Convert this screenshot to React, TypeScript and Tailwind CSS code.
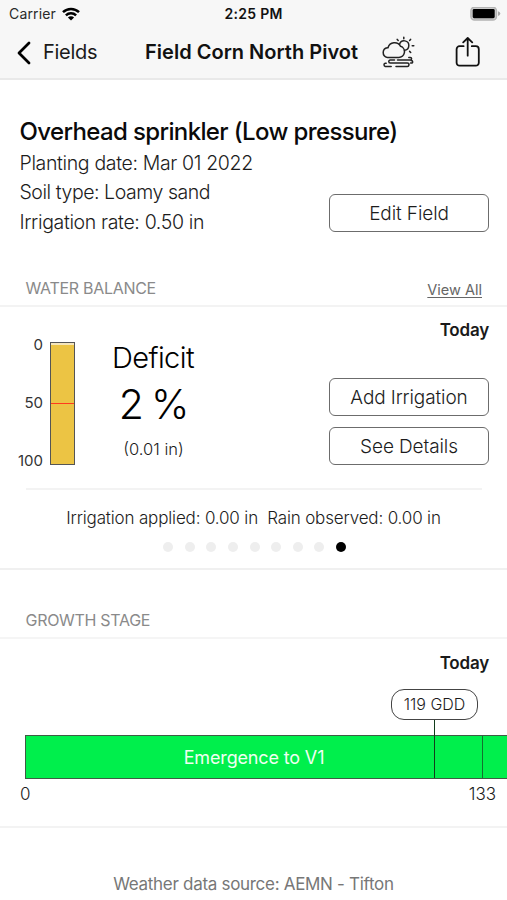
import React from "react";

function StatusBar() {
  return (
    <div className="relative flex h-7 items-center justify-between pl-[9px] pr-[6px]">
      <div className="flex items-center gap-[6px] text-[14px] leading-7 text-[#2a2a2a]">
        <span className="tracking-[0.15px]">Carrier</span>
        <svg width="18" height="14" viewBox="0 0 18 14" fill="none" stroke="#000" strokeWidth="2.5">
          <path d="M1 5.2A11.4 11.4 0 0 1 17 5.2" />
          <path d="M3.9 8.4A7.3 7.3 0 0 1 14.1 8.4" />
          <path d="M9 13.4 5.9 10.5A4.4 4.4 0 0 1 12.1 10.5Z" fill="#000" stroke="none" />
        </svg>
      </div>
      <span className="absolute left-[224.5px] top-0 text-[14px] font-semibold leading-7 tracking-[0.3px] text-[#111]">
        2:25 PM
      </span>
      <svg width="31" height="14" viewBox="0 0 31 14">
        <rect x="0.9" y="0.2" width="25.6" height="12.8" rx="3.6" fill="#ccc" stroke="#b4b4b4" strokeWidth="1.4" />
        <rect x="2.7" y="2" width="22" height="9.2" rx="1.4" fill="#000" />
        <path d="M28 4.2Q30.3 4.8 30.3 6.6T28 9Z" fill="#a9a9a9" />
      </svg>
    </div>
  );
}

function WeatherIcon() {
  return (
    <svg width="33" height="33" viewBox="0 0 33 33" fill="none" stroke="#222" strokeWidth="1.5" strokeLinecap="round" strokeLinejoin="round">
      <path d="M5.4 21.4A4.9 4.9 0 0 1 5.4 11.7H6A6.9 6.9 0 0 1 18.6 10.3A5.7 5.7 0 0 1 16.6 21.4Z" />
      <path d="M17.6 8.2A4.7 4.7 0 1 1 22.4 14.2" />
      <path d="M21.8 1.2v1.6M15.2 3.4l1 1.1M28.6 3.4l-1 1.1M30.2 9.8h1.6M27.6 15.4l1.1 1.1" />
      <path
        d="M15.5 24H28.3A1.3 1.3 0 0 0 28.3 21.4H26.8M12.5 24H8.2A1.4 1.4 0 0 0 8.2 26.9H25.5M29.3 24.6A1.3 1.3 0 0 1 30.2 26.9H28.6M25.4 26.9A1.7 1.7 0 0 1 25 30.4H14M9.2 30.4H3.2A1.6 1.6 0 0 1 3.2 27.3H4.2"
        strokeWidth="1.5"
      />
    </svg>
  );
}

function NavBar() {
  return (
    <div className="flex h-[49px] items-center pl-[17px] text-[20px] leading-[49px]">
      <svg width="14" height="24" viewBox="0 0 14 24" fill="none" stroke="#000" strokeWidth="2.8" strokeLinecap="round" strokeLinejoin="round">
        <path d="M12 2 2 12l10 10" />
      </svg>
      <span className="ml-[12px] w-[102px] tracking-[-0.3px] text-[#1a1a1a]">Fields</span>
      <span className="w-[237px] whitespace-nowrap font-semibold tracking-[0.02px] text-[#111]">
        Field Corn North Pivot
      </span>
      <WeatherIcon />
      <svg className="ml-[40px]" width="26" height="32" viewBox="0 0 26 32" fill="none" stroke="#111" strokeWidth="1.8" strokeLinecap="round" strokeLinejoin="round">
        <path d="M8.6 9.2H4.6A3 3 0 0 0 1.6 12.2V25.7A3 3 0 0 0 4.6 28.7H20.8A3 3 0 0 0 23.8 25.7V12.2A3 3 0 0 0 20.8 9.2H16.8" />
        <path d="M12.7 18.7V1.2M8.2 5.4 12.7 1l4.5 4.4" />
      </svg>
    </div>
  );
}

function OutlineButton({ children }: { children: React.ReactNode }) {
  return (
    <button className="flex h-[38px] w-[160px] items-center justify-center rounded-[6px] border border-[#6c6c6c] bg-white pt-[2px] text-[19px] font-light tracking-[-0.1px] text-[#1c1c1c]">
      {children}
    </button>
  );
}

function FieldSummary() {
  return (
    <section className="flex h-[190px] justify-between pl-[19.5px] pr-[18px] pt-[35px]">
      <div className="w-[300px] whitespace-nowrap text-[19.5px] font-light leading-[29.4px] tracking-[-0.35px] text-[#1c1c1c]">
        <h1 className="text-[24px] font-medium leading-[35px] tracking-[-0.63px] text-[#0a0a0a]">
          Overhead sprinkler (Low pressure)
        </h1>
        <p>Planting date: Mar 01 2022</p>
        <p className="tracking-[-0.45px]">Soil type: Loamy sand</p>
        <p>Irrigation rate: 0.50 in</p>
      </div>
      <div className="pt-[80px]">
        <OutlineButton>Edit Field</OutlineButton>
      </div>
    </section>
  );
}

function WaterBalance() {
  return (
    <section>
      <div className="flex h-[38px] justify-between border-b-2 border-[#f3f3f3] pl-[25.5px] pr-[25px]">
        <h2 className="text-[16px] leading-[38px] tracking-[-0.3px] text-[#8a8a8a]">WATER BALANCE</h2>
        <a className="text-[14.5px] leading-[41px] text-[#666] underline underline-offset-2">View All</a>
      </div>
      <div className="flex h-[181px] pr-[18px]">
        <div className="flex w-[43px] flex-col items-end pt-[28px] text-[15px] leading-[20px] text-[#333]">
          <span>0</span>
          <span className="mt-[38px]">50</span>
          <span className="mt-[38px]">100</span>
        </div>
        <div className="ml-[7px] mt-[35px] flex h-[123px] w-[25px] flex-col border border-[#555] bg-[#ecc444]">
          <div className="h-[2px] shrink-0 bg-[#f5e6bb]" />
          <div className="mt-[58px] h-px shrink-0 bg-[#ff3b1e]" />
        </div>
        <div className="ml-[3px] flex w-[150px] flex-col items-center pt-[33px] font-light text-black">
          <span className="text-[29px] leading-[36px] tracking-[-0.6px]">Deficit</span>
          <span className="text-[41px] leading-[56px] tracking-[-2.2px]">2 %</span>
          <span className="mt-[2px] pl-px text-[16.5px] leading-[30px] text-[#1c1c1c]">(0.01 in)</span>
        </div>
        <div className="ml-auto flex flex-col items-end">
          <span className="mt-[13px] text-[17px] font-semibold leading-[20px] tracking-[-0.2px] text-[#1a1a1a]">Today</span>
          <div className="mt-[38px] flex flex-col gap-[11px]">
            <OutlineButton>Add Irrigation</OutlineButton>
            <OutlineButton>See Details</OutlineButton>
          </div>
        </div>
      </div>
      <div className="ml-[26px] mr-[25px] h-[2px] bg-[#f3f3f3]" />
      <p className="h-[50px] whitespace-pre text-center text-[17px] font-light leading-[56px] tracking-[-0.16px] text-[#1c1c1c]">
        Irrigation applied: 0.00 in  Rain observed: 0.00 in
      </p>
      <div className="flex h-[30px] justify-center gap-[11.6px] border-b-2 border-[#f0f0f0] pl-[2px] pt-[2px]">
        {[0, 1, 2, 3, 4, 5, 6, 7].map((page) => (
          <span key={page} className="size-[10px] rounded-full bg-[#eeeeee]" />
        ))}
        <span className="size-[10px] rounded-full bg-black" />
      </div>
    </section>
  );
}

function GrowthStage() {
  return (
    <section>
      <h2 className="h-[69px] border-b-2 border-[#f5f5f5] pl-[25.5px] pt-[31px] text-[16px] leading-[38px] tracking-[-0.3px] text-[#8a8a8a]">
        GROWTH STAGE
      </h2>
      <div className="h-[189px] border-b-2 border-[#f3f3f3] pt-[14px]">
        <div className="pr-[18px] text-right text-[17px] font-semibold leading-[20px] tracking-[-0.2px] text-[#1a1a1a]">Today</div>
        <div className="relative ml-[25px] mt-[62px] flex h-[44px] border-y border-l border-[#3f5c45] bg-[#00ef4c]">
          <span className="w-[456px] text-center text-[18px] leading-[43px] tracking-[-0.15px] text-[#f0fff2]">Emergence to V1</span>
          <span className="w-px bg-[#14702e]" />
          <div className="absolute left-[365px] top-[-47px] flex h-[89px] w-[87px] flex-col items-center">
            <span className="h-[31px] w-[87px] rounded-[13px] border-[1.5px] border-[#444] bg-white text-center text-[16px] font-light leading-[29px] text-[#1c1c1c]">
              119 GDD
            </span>
            <span className="w-[1.5px] flex-1 bg-[#123d1c]" />
          </div>
        </div>
        <div className="flex justify-between pl-[20px] pr-[11px] pt-[4px] text-[17px] font-light leading-[22px] text-[#1c1c1c]">
          <span>0</span>
          <span>133</span>
        </div>
      </div>
    </section>
  );
}

export default function App() {
  return (
    <main className="h-[900px] w-[507px] overflow-hidden bg-white font-['Inter','Liberation_Sans',sans-serif]">
      <header className="h-[80px] border-b-2 border-[#e9e9e9] bg-[#f7f7f7]">
        <StatusBar />
        <NavBar />
      </header>
      <div className="-mt-[1px]">
        <FieldSummary />
        <WaterBalance />
        <GrowthStage />
      </div>
      <footer className="pt-[45px] text-center text-[17px] leading-[22px] tracking-[-0.3px] text-[#777]">
        Weather data source: AEMN - Tifton
      </footer>
    </main>
  );
}
